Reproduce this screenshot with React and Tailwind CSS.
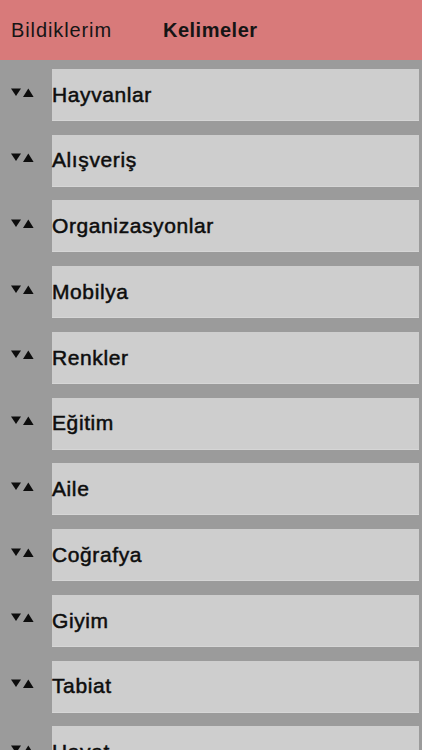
import React from "react";

const categories = [
  "Hayvanlar",
  "Alışveriş",
  "Organizasyonlar",
  "Mobilya",
  "Renkler",
  "Eğitim",
  "Aile",
  "Coğrafya",
  "Giyim",
  "Tabiat",
  "Hayat",
  "Meslekler",
];

const SortArrows = () => (
  <svg width="24" height="10" viewBox="0 0 24 10" className="block">
    <polygon points="0,0.5 10,0.5 5,8" fill="#0d0d0d" />
    <polygon points="12,9 17.3,0.5 22.6,9" fill="#0d0d0d" />
  </svg>
);

const App = () => {
  return (
    <div
      className="w-[422px] h-[750px] overflow-hidden bg-[#9b9b9b]"
      style={{ fontFamily: '"Liberation Sans", Arial, sans-serif' }}
    >
      <div className="h-[60px] bg-[#d87a7a] flex items-center text-[#151515]">
        <span className="pl-[11px] text-[20px] tracking-[0.9px] w-[163px]">Bildiklerim</span>
        <span className="text-[20px] font-bold tracking-[0.5px]">Kelimeler</span>
      </div>
      <div className="pt-[9px] flex flex-col gap-[13.74px]">
        {categories.map((name) => (
          <div key={name} className="flex h-[52px] shrink-0">
            <div className="w-[52px] shrink-0 flex items-center pl-[11px] pb-[5px]">
              <SortArrows />
            </div>
            <div className="flex-1 mr-[3px] bg-[#cecece] border-b border-[#d6d6d6] flex items-center">
              <span className="text-[21px] tracking-[0.6px] text-[#0d0d0d] [-webkit-text-stroke:0.5px_#0d0d0d]">
                {name}
              </span>
            </div>
          </div>
        ))}
      </div>
    </div>
  );
};

export default App;
